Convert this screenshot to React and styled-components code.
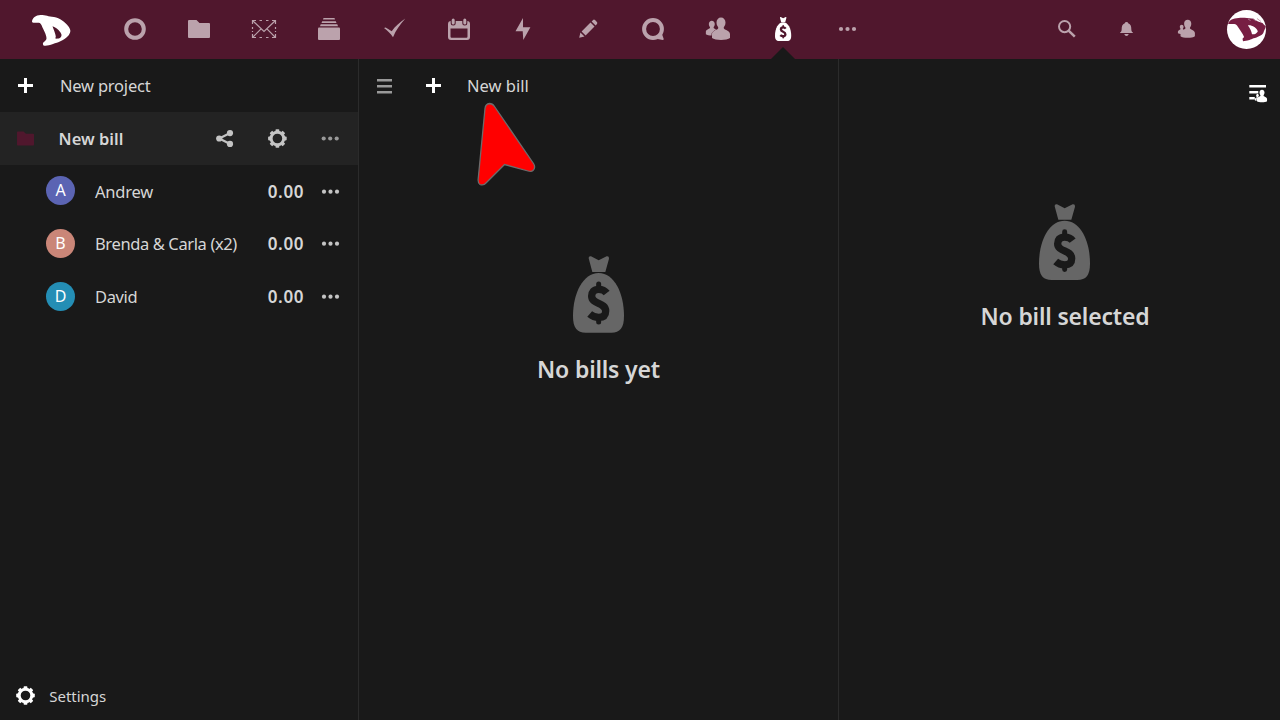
import React from "react";
import styled, { createGlobalStyle } from "styled-components";

const Global = createGlobalStyle`
  * { box-sizing: border-box; }
  body { margin: 0; background: #191919; overflow: hidden; }
  svg { display: block; flex: none; overflow: visible; }
`;

const Page = styled.div`
  position: relative;
  width: 1280px;
  height: 720px;
  display: flex;
  flex-direction: column;
  background: #191919;
  color: #d6d6d6;
  font-family: "Noto Sans", sans-serif;
`;

const TopBar = styled.header`
  height: 59px;
  flex: none;
  display: flex;
  background: #50172d;
  color: #bba2ac;
`;

const LogoLink = styled.div`
  width: 102.3px;
  padding: 14px 0 0 31px;
`;

const Apps = styled.nav`
  display: flex;
  flex: 1;
`;

const AppItem = styled.div`
  position: relative;
  width: 64.8px;
  padding-top: 15px;
  display: flex;
  justify-content: center;
  align-items: flex-start;
  color: ${(p) => (p.$active ? "#fff" : "inherit")};
  &::after {
    content: "";
    display: ${(p) => (p.$active ? "block" : "none")};
    position: absolute;
    bottom: 0;
    left: 20.4px;
    border: 12px solid transparent;
    border-top-width: 0;
    border-bottom-color: #191919;
  }
`;

const Tools = styled.div`
  display: flex;
  width: 243.2px;
`;

const Tool = styled.div`
  width: 60px;
  padding-top: 15px;
  display: flex;
  justify-content: center;
`;

const Avatar = styled.div`
  width: 39px;
  height: 39px;
  margin: 9.5px 0 0 9.8px;
`;

const Main = styled.main`
  display: flex;
  flex: 1;
`;

const Sidebar = styled.aside`
  width: 359px;
  display: flex;
  flex-direction: column;
  border-right: 1px solid #2b2b2b;
`;

const BillList = styled.section`
  width: 480px;
  border-right: 1px solid #2b2b2b;
`;

const Details = styled.section`
  flex: 1;
`;

const Row = styled.div`
  height: ${(p) => p.$height || 53}px;
  flex: none;
  display: flex;
  align-items: center;
  padding-left: ${(p) => p.$indent || 0}px;
  padding-right: 1.5px;
  background: ${(p) => (p.$selected ? "#232323" : "transparent")};
`;

const Members = styled.div`
  padding-top: 0.5px;
`;

const Label = styled.span`
  flex: ${(p) => (p.$grow ? 1 : "none")};
  margin-left: ${(p) => p.$gap || 0}px;
  font-size: ${(p) => p.$size || 16.5}px;
  font-weight: ${(p) => (p.$bold ? 600 : 400)};
  letter-spacing: ${(p) => p.$track || 0}px;
  line-height: 24px;
  white-space: nowrap;
`;

const Action = styled.div`
  width: ${(p) => p.$width || 52.8}px;
  display: flex;
  justify-content: center;
  color: ${(p) => p.$color || "#c4c4c4"};
`;

const Initial = styled.div`
  width: 29px;
  height: 29px;
  margin-top: -1.7px;
  border-radius: 50%;
  background: ${(p) => p.$color};
  color: #fff;
  font-size: 16px;
  line-height: 29px;
  text-align: center;
`;

const Amount = styled(Label)`
  width: 36px;
`;

const Footer = styled.div`
  margin-top: auto;
`;

const DetailsBar = styled.div`
  height: 68px;
  padding: 20px 8px 0 0;
  display: flex;
  justify-content: flex-end;
  color: #fff;
`;

const Empty = styled.div`
  padding-top: ${(p) => p.$top}px;
  padding-left: ${(p) => p.$left || 0}px;
  display: flex;
  flex-direction: column;
  align-items: center;
`;

const EmptyTitle = styled.h2`
  margin: 19px 0 0;
  font-size: 23px;
  line-height: 34px;
  font-weight: 600;
  letter-spacing: -0.18px;
  white-space: nowrap;
`;

const Pointer = styled.svg`
  position: absolute;
  left: 470px;
  top: 96px;
`;

const Icon = ({ children, size = 28, dx = 0, dy = 0 }) => (
  <svg width={size} height={size} viewBox={`${-14 - dx} ${-14 - dy} 28 28`} fill="currentColor">
    {children}
  </svg>
);

const Dots = ({ r = 2.1, step = 6.5, dx = 0.5, dy = 0 }) => (
  <Icon dx={dx} dy={dy}>
    <circle cx={-step} r={r} />
    <circle r={r} />
    <circle cx={step} r={r} />
  </Icon>
);

const Plus = () => (
  <Icon dx={-0.5} dy={-0.5}>
    <path d="M-1.5-7.5h3v6h6v3h-6v6h-3v-6h-6v-3h6z" />
  </Icon>
);

const Folder = ({ w = 22, dx = 0, dy = 0 }) => (
  <Icon size={(28 * w) / 22} dx={dx} dy={dy}>
    <path d="M-10-9H-2.5L.5-6H10Q11-6 11-5V8Q11 9 10 9H-10Q-11 9-11 8V-8Q-11-9-10-9Z" />
  </Icon>
);

const Gear = ({ dx = 0 }) => (
  <Icon dx={dx} dy={-0.5}>
    <circle r="6.3" fill="none" stroke="currentColor" strokeWidth="3" />
    {[0, 45, 90, 135, 180, 225, 270, 315].map((a) => (
      <rect key={a} x="-1.9" y="-9.3" width="3.8" height="3.5" rx="0.8" transform={`rotate(${a})`} />
    ))}
  </Icon>
);

const Share = () => (
  <Icon dx={-0.4} dy={-0.5}>
    <path d="M5.5-5.5L-5.3 0L5.5 5.5" fill="none" stroke="currentColor" strokeWidth="2.2" />
    <circle cx="5.4" cy="-5.4" r="3.1" />
    <circle cx="-5.4" r="3.1" />
    <circle cx="5.4" cy="5.4" r="3.1" />
  </Icon>
);

const Bag = ({ width, height, cut }) => (
  <svg width={width} height={height} viewBox="0 0 153 230" preserveAspectRatio="none" fill="currentColor">
    <path d="M47 7Q46 0 54 1L77 13L101 1Q109 0 108 8L97 48H58Z" />
    <path d="M77 51C30 51 0 112 0 180C0 216 12 230 38 230H115C141 230 153 216 153 180C153 112 124 51 77 51Z" />
    <g fill="none" stroke={cut} strokeWidth="22">
      <path d="M77 84V100M77 182V198" strokeWidth="15" strokeLinecap="round" />
      <path d="M101 111C95 103 87 100 77 100C62 100 56 108 56 120C56 146 98 138 98 165C98 178 91 184 77 184C67 184 58 181 50 174" strokeLinejoin="round" />
    </g>
  </svg>
);

const Person = "M-4.5-6.5C-4.5-9.5-2.5-11.5 0-11.5S4.5-9.5 4.5-6.5C4.5-3.5 3-2.5 2.7-1.2C2.5 1 9 1.5 9 5V9C6 11.5-6 11.5-9 9V5C-9 1.5-2.5 1-2.7-1.2C-3-2.5-4.5-3.5-4.5-6.5Z";

const apps = [
  <Icon><circle r="8.8" fill="none" stroke="currentColor" strokeWidth="4" /></Icon>,
  <Folder />,
  <Icon>
    <g fill="none" stroke="currentColor" strokeWidth="1.2">
      <path d="M-11.5-8.5L0 2.5L11.5-8.5M-11.5 8.5L-3.2 .2M11.5 8.5L3.2 .2" />
      <path d="M-11.5-5V-8.5H-8M11.5-5V-8.5H8M-11.5 5V8.5H-8M11.5 5V8.5H8M-4.5-8.5H-2M2-8.5H4.5M-4.5 8.5H-2M2 8.5H4.5M-11.5-2V0M-11.5 2V3M11.5-2V0M11.5 2V3" />
    </g>
  </Icon>,
  <Icon>
    <path d="M-5.5-11H5.5L6-9.4H-6ZM-6.8-7.7H6.8L7.5-5.9H-7.5ZM-8.3-4.7H8.3L9-2.8H-9Z" />
    <rect x="-11" y="-1.6" width="22" height="12.6" rx="1" />
  </Icon>,
  <Icon dx={0.5}><path d="M-10.5-1L-8.8-1.5L-2.8 2.2C1-3 5-6.5 10.8-10.5C5.5-4.5 1.5 1-1.5 8.2C-4 4.5-7 1.5-10.5-1Z" /></Icon>,
  <Icon>
    <path fillRule="evenodd" d="M-8-8H8Q11-8 11-5V8Q11 11 8 11H-8Q-11 11-11 8V-5Q-11-8-8-8ZM-8.5-.5V7.5Q-8.5 8.7-7.5 8.7H7.5Q8.5 8.7 8.5 7.5V-.5Z" />
    <path d="M-5.8-9V-6M5.8-9V-6" stroke="#50172d" strokeWidth="5" strokeLinecap="round" />
    <path d="M-5.8-9V-6M5.8-9V-6" stroke="currentColor" strokeWidth="3" strokeLinecap="round" />
  </Icon>,
  <Icon><path d="M0-11L-7.5 2.3H-.3L.3 11L7.4-1.8H0Z" /></Icon>,
  <Icon>
    <path d="M-8.8 8.8L-7.6 3.5L-3.5 7.6ZM-6.4 2.4L2.5-6.5L6.5-2.5L-2.4 6.4ZM3.6-7.6L5.1-9Q6-9.8 7-8.9L8.9-7Q9.8-6 9-5.1L7.6-3.6Z" />
  </Icon>,
  <Icon>
    <circle r="8.9" fill="none" stroke="currentColor" strokeWidth="4" />
    <path d="M5 9L9 5L10.7 10Q10.8 11 9.8 11L4.5 10Z" />
  </Icon>,
  <Icon>
    <path transform="translate(-6.2 -.7) scale(.66)" d={Person} />
    <path d={Person} transform="translate(3)" stroke="#50172d" strokeWidth="0.9" paintOrder="stroke" />
  </Icon>,
  <svg width="28" height="28" viewBox="0 0 28 28">
    <g transform="translate(6 2)"><Bag width={16.2} height={24} cut="#50172d" /></g>
  </svg>,
  <Dots />,
];

const members = [
  { name: "Andrew", color: "#5b64b3", track: -0.22 },
  { name: "Brenda & Carla (x2)", color: "#ca8678", track: -0.38 },
  { name: "David", color: "#248eb5", track: -0.38 },
];

const Logo = () => (
  <svg width="40" height="32" viewBox="31 14 40 32" fill="#fff">
    <path fillRule="evenodd" d="M32 22C32 18 36 15 40.500 15C46 15 48 16.500 54 17C60 18 65 22 68.500 26.500C71 30 71 32 68.500 35.500C64 40.500 58 42.300 53 44C49 45.500 46 46 43.500 45.500C42.600 44 42.800 42.800 43.800 42C45.300 41 46.400 40 46.500 38.300C46.500 36 44.800 32 43 28.600C42 26.300 41.300 24 39.800 23C37.500 22.200 34 23.500 32 22ZM52.500 26.300C53.500 29 55.600 34 55.800 36.500L55.300 38.600C57.500 38.900 59.500 38.500 60.500 37.500C62 35.800 61.800 34.500 60.500 32.500C58.300 29.500 55.500 27.200 52.500 26.300Z" />
  </svg>
);

const AvatarLogo = () => (
  <svg width="39" height="39" viewBox="0 0 39 39">
    <circle cx="19.5" cy="19.5" r="19.5" fill="#fff" />
    <path fill="#771e43" fillRule="evenodd" d="M1 13.8C2.5 9.5 6 8.6 11.5 8C17 7.2 21 8.6 25.5 8.4L31 11.6L35.5 13L37 14.8L38.8 16.2C38.5 19 37 20 36.5 22.5C35.5 25.5 32 26 29.5 27.5C25 28.5 23.5 30 20.5 30.5L16 31.2L15.5 28.8L17.1 27C15.8 23.5 12.6 19.5 10 15.5C8 12.8 4 14.8 1 13.8ZM20.8 15.3C23 18.300 24.500 21.300 25 24.200C27 24.800 29.300 23.800 30.700 21.800C31 19.700 28.300 17.300 26 16.200C24 15.300 22.500 15.300 20.8 15.3Z" />
    <path d="M21 9L23.5 10.5M26 8.5L29 11M30 8.5L34 11.5" stroke="#b98a9d" strokeWidth="0.8" />
  </svg>
);

export default function App() {
  return (
    <Page>
      <Global />
      <TopBar>
        <LogoLink><Logo /></LogoLink>
        <Apps>
          {apps.map((icon, i) => <AppItem key={i} $active={i === 10}>{icon}</AppItem>)}
        </Apps>
        <Tools>
          <Tool>
            <Icon>
              <circle cx="-2.4" cy="-2.4" r="5.6" fill="none" stroke="currentColor" strokeWidth="2" />
              <path d="M1.6 1.6L7.8 7.6" stroke="currentColor" strokeWidth="2.5" />
            </Icon>
          </Tool>
          <Tool>
            <Icon dx={-0.5}><path d="M0-7Q1.5-7 1.7-5.7C4.3-4.7 4.8-2.5 4.8 0C4.8 2 5.3 2.8 6.4 3.5V4H-6.4V3.5C-5.3 2.8-4.8 2-4.8 0C-4.8-2.5-4.3-4.7-1.7-5.7Q-1.5-7 0-7ZM-2.3 5H2.3Q1.5 7 0 7T-2.3 5Z" /></Icon>
          </Tool>
          <Tool>
            <Icon dx={-0.5}>
              <path transform="translate(-4.8 .5) scale(.42)" d={Person} />
              <path transform="translate(1.2 0) scale(.8)" d={Person} />
            </Icon>
          </Tool>
          <Avatar><AvatarLogo /></Avatar>
        </Tools>
      </TopBar>
      <Main>
        <Sidebar>
          <Row>
            <Action $width={51} $color="#fff"><Plus /></Action>
            <Label $gap={9} $track={-0.22}>New project</Label>
          </Row>
          <Row $selected>
            <Action $width={51} $color="#50172d"><Folder w={17} dx={-0.4} dy={-0.4} /></Action>
            <Label $gap={7.6} $bold $grow>New bill</Label>
            <Action><Share /></Action>
            <Action><Gear dx={0.4} /></Action>
            <Action $color="#999"><Dots dx={0.2} dy={-0.5} /></Action>
          </Row>
          <Members>
            {members.map((m) => (
              <Row key={m.name} $height={52.6} $indent={46}>
                <Initial $color={m.color}>{m.name[0]}</Initial>
                <Label $gap={20} $track={m.track} $grow>{m.name}</Label>
                <Amount $bold $size={17} $track={0.65}>0.00</Amount>
                <Action><Dots dy={-0.3} /></Action>
              </Row>
            ))}
          </Members>
          <Footer>
            <Row $height={49}>
              <Action $width={51} $color="#fff"><Gear dx={-0.5} /></Action>
              <Label $gap={-1.8} $size={15}>Settings</Label>
            </Row>
          </Footer>
        </Sidebar>
        <BillList>
          <Row>
            <Action $width={51} $color="#999">
              <Icon dx={-0.5} dy={0.3}><path d="M-7.5-7.2h15v2.4h-15zM-7.5-1.2h15v2.4h-15zM-7.5 4.8h15v2.4h-15z" /></Icon>
            </Action>
            <Action $width={47} $color="#fff"><Plus /></Action>
            <Label $gap={10}>New bill</Label>
          </Row>
          <Empty $top={144}>
            <Action $color="#666"><Bag width={51} height={76.7} cut="#191919" /></Action>
            <EmptyTitle>No bills yet</EmptyTitle>
          </Empty>
        </BillList>
        <Details>
          <DetailsBar>
            <Icon>
              <path d="M-8.7-8h16.7v2.5h-16.7zM-8.7-2h9v2.5h-9zM-8.7 4h5.5v2.5h-5.5z" />
              <path transform="translate(-.5 4.5) scale(.3)" d={Person} />
              <path transform="translate(4 3.2) scale(.56)" d={Person} stroke="#191919" strokeWidth="1.2" paintOrder="stroke" />
            </Icon>
          </DetailsBar>
          <Empty $top={77} $left={11}>
            <Action $color="#666"><Bag width={51} height={76} cut="#191919" /></Action>
            <EmptyTitle>No bill selected</EmptyTitle>
          </Empty>
        </Details>
      </Main>
      <Pointer width="76" height="98" viewBox="470 96 76 98">
        <path d="M485 108.5Q485.5 104 489.5 103.5Q492.5 103.5 494.5 106.5L533.5 163.5Q536 167.5 533 170.5Q531.5 172 528 171L504.5 164.5L486.5 182.5Q483.5 186 480 184.5Q477.8 183 478.2 179Z" fill="#f00" stroke="#6c6c6c" strokeWidth="1.3" />
      </Pointer>
    </Page>
  );
}
